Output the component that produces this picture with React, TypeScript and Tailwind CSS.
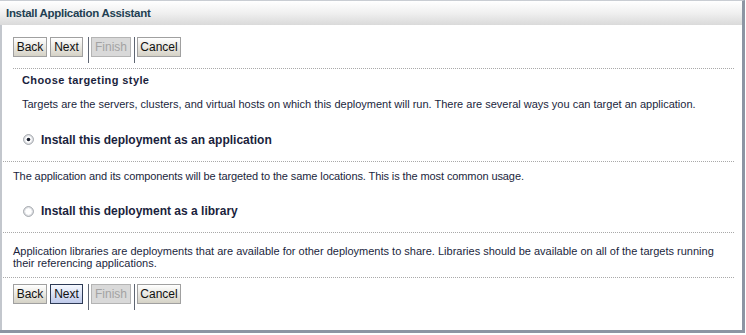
import React from "react";

const bodyFont = { fontFamily: '"Liberation Sans", Tahoma, Arial, sans-serif' };

function Btn({ label, w, variant = "normal" }: { label: string; w: string; variant?: "normal" | "active" | "disabled" }) {
  const cls =
    variant === "disabled"
      ? "border-[#b4b4b4] bg-[#d9d9d9] text-[#a3a3a3]"
      : variant === "active"
      ? "border-[#2d3a55] bg-gradient-to-b from-[#f6f9ff] to-[#bfcaea] text-[#111]"
      : "border-[#a0a0a0] bg-gradient-to-b from-white to-[#d5d2c6] text-[#111]";
  return (
    <div
      className={`h-[20px] border flex items-center justify-center text-[12px] leading-none ${w} ${cls}`}
      style={{ fontFamily: '"Liberation Sans", Arial, sans-serif' }}
    >
      {label}
    </div>
  );
}

function ButtonBar({ active }: { active?: boolean }) {
  return (
    <div className="flex items-start pl-[11px] h-[26px]">
      <Btn label="Back" w="w-[34px]" />
      <div className="w-[3px]" />
      <Btn label="Next" w="w-[33px]" variant={active ? "active" : "normal"} />
      <div className="w-[5px]" />
      <div className="w-px h-[26px] bg-[#5f6673]" />
      <div className="w-[2px]" />
      <Btn label="Finish" w="w-[40px]" variant="disabled" />
      <div className="w-[3px]" />
      <div className="w-px h-[26px] bg-[#5f6673]" />
      <div className="w-[2px]" />
      <Btn label="Cancel" w="w-[44px]" />
    </div>
  );
}

function Dotted({ inset }: { inset?: boolean }) {
  return <div className={`border-t border-dotted border-[#a9a9a9] ${inset ? "ml-[11px]" : "ml-px"} mr-[8px]`} />;
}

function Radio({ checked }: { checked?: boolean }) {
  return (
    <svg width="11" height="11" viewBox="0 0 11 11">
      <circle cx="5.5" cy="5.5" r="4.8" fill="white" stroke="#8a8f96" strokeWidth="1" />
      <circle cx="5.5" cy="5.5" r="3.8" fill="none" stroke="#d8dbe0" strokeWidth="0.8" />
      {checked && <circle cx="5.5" cy="5.5" r="1.8" fill="#1a1f2e" />}
    </svg>
  );
}

export default function App() {
  return (
    <div className="w-[746px] h-[335px] bg-white">
      <div className="w-[745px] h-[333px] flex flex-col border-t border-r-[3px] border-b-[3px] border-t-[#c9cdd3] border-r-[#8d95a3] border-b-[#8d95a3]">
        <div
          className="h-[24px] flex items-center pl-[6px] pt-[2px] bg-gradient-to-b from-white via-[#f0f0f0] to-[#dadada] text-[11.5px] tracking-[-0.3px] font-bold text-[#223f52]"
          style={bodyFont}
        >
          Install Application Assistant
        </div>
        <div className="flex-1 border-l-[2px] border-[#c3c7cd] flex flex-col text-[11px] text-[#1b1f3d]" style={bodyFont}>
          <div className="pt-[12px]">
            <ButtonBar />
          </div>
          <div className="mt-[5px]">
            <Dotted inset />
          </div>
          <div className="pl-[20px] h-[22px] flex items-center font-bold tracking-[0.4px]">Choose targeting style</div>
          <div className="pl-[20px] h-[27px] flex items-center">
            Targets are the servers, clusters, and virtual hosts on which this deployment will run. There are several ways you can target an application.
          </div>
          <div className="pl-[21px] h-[43px] flex items-center gap-[7px] font-bold text-[12px]">
            <Radio checked />
            <span>Install this deployment as an application</span>
          </div>
          <Dotted />
          <div className="pl-[11px] h-[28px] flex items-center tracking-[-0.1px]">
            The application and its components will be targeted to the same locations. This is the most common usage.
          </div>
          <div className="pl-[21px] h-[42px] flex items-center gap-[7px] font-bold text-[12px]">
            <Radio />
            <span>Install this deployment as a library</span>
          </div>
          <Dotted />
          <div className="pl-[11px] pr-[20px] pt-[4px] h-[44px] flex items-center leading-[12px]">
            Application libraries are deployments that are available for other deployments to share. Libraries should be available on all of the targets running their referencing applications.
          </div>
          <Dotted />
          <div className="pt-[6px]">
            <ButtonBar active />
          </div>
        </div>
      </div>
    </div>
  );
}
